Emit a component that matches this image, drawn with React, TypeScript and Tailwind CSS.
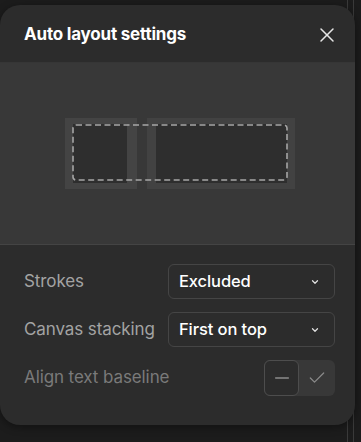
import { X, ChevronDown, Minus, Check } from 'lucide-react';

const rows = [
  { label: 'Strokes', value: 'Excluded' },
  { label: 'Canvas stacking', value: 'First on top' },
];

export default function App() {
  return (
    <div className="relative w-[361px] h-[442px] overflow-hidden bg-[#1c1c1c] font-['Inter',sans-serif]">
      {/* lines from the editor behind */}
      <div className="absolute top-0 bottom-0 left-[347px] w-px bg-[#3a3a3a]" />
      <div className="absolute top-0 bottom-0 left-[353px] w-px bg-[#3a3a3a]" />

      <div className="relative mt-[5px] w-[355px] h-[420px] rounded-[20px] bg-[#2c2c2c] overflow-hidden flex flex-col shadow-[0_2px_8px_rgba(0,0,0,0.4)]">
        {/* Header */}
        <div className="h-[58px] flex items-center justify-between pl-6 pr-[16px] pt-[2px] border-b border-[#363636]">
          <span className="text-[17px] font-bold text-white tracking-[-0.2px]">Auto layout settings</span>
          <X className="w-[24px] h-[24px] text-[#e6e6e6]" strokeWidth={1.5} />
        </div>

        {/* Preview */}
        <div className="h-[182px] bg-[#383838] border-b border-[#444] flex items-center pl-[65px]">
          <div className="relative flex gap-[10px]">
            <div className="w-[72px] h-[71px] bg-[#444] pl-[8px] pr-[10px] py-[6px]">
              <div className="w-full h-full bg-[#2e2e2e]" />
            </div>
            <div className="w-[148px] h-[71px] bg-[#424242] pl-[9px] pr-[8px] py-[6px]">
              <div className="w-full h-full bg-[#2e2e2e]" />
            </div>
            <svg className="absolute left-[7px] top-[6px]" width="216" height="57" viewBox="0 0 216 57">
              <rect x="1" y="1" width="214" height="55" rx="3" fill="none" stroke="#a6a6a6" strokeWidth="1.6" strokeDasharray="6 3.5" />
            </svg>
          </div>
        </div>

        {/* Settings */}
        <div className="flex flex-col gap-[13px] pt-[19px] pl-6 pr-5">
          {rows.map((row, i) => (
            <div key={i} className="flex items-center justify-between">
              <span className="text-[17px] text-[#a3a3a3] tracking-[-0.1px]">{row.label}</span>
              <div className="w-[167px] h-[35px] rounded-[6px] border border-[#454545] flex items-center justify-between pl-[10px] pr-[14px]">
                <span className="text-[16.5px] text-white font-medium tracking-[-0.1px]">{row.value}</span>
                <ChevronDown className="w-[10px] h-[10px] text-[#e0e0e0]" strokeWidth={3} />
              </div>
            </div>
          ))}
          <div className="flex items-center justify-between">
            <span className="text-[17px] text-[#7a7a7a] tracking-[-0.1px]">Align text baseline</span>
            <div className="flex w-[71px] h-[36px] rounded-[6px] bg-[#383838]">
              <div className="w-[35px] h-[36px] rounded-[6px] border border-[#4d4d4d] bg-[#2c2c2c] flex items-center justify-center">
                <Minus className="w-[22px] h-[22px] text-[#8a8a8a]" strokeWidth={1.4} />
              </div>
              <div className="flex-1 flex items-center justify-center">
                <Check className="w-[20px] h-[20px] text-[#8a8a8a]" strokeWidth={1.5} />
              </div>
            </div>
          </div>
        </div>
      </div>
    </div>
  );
}
